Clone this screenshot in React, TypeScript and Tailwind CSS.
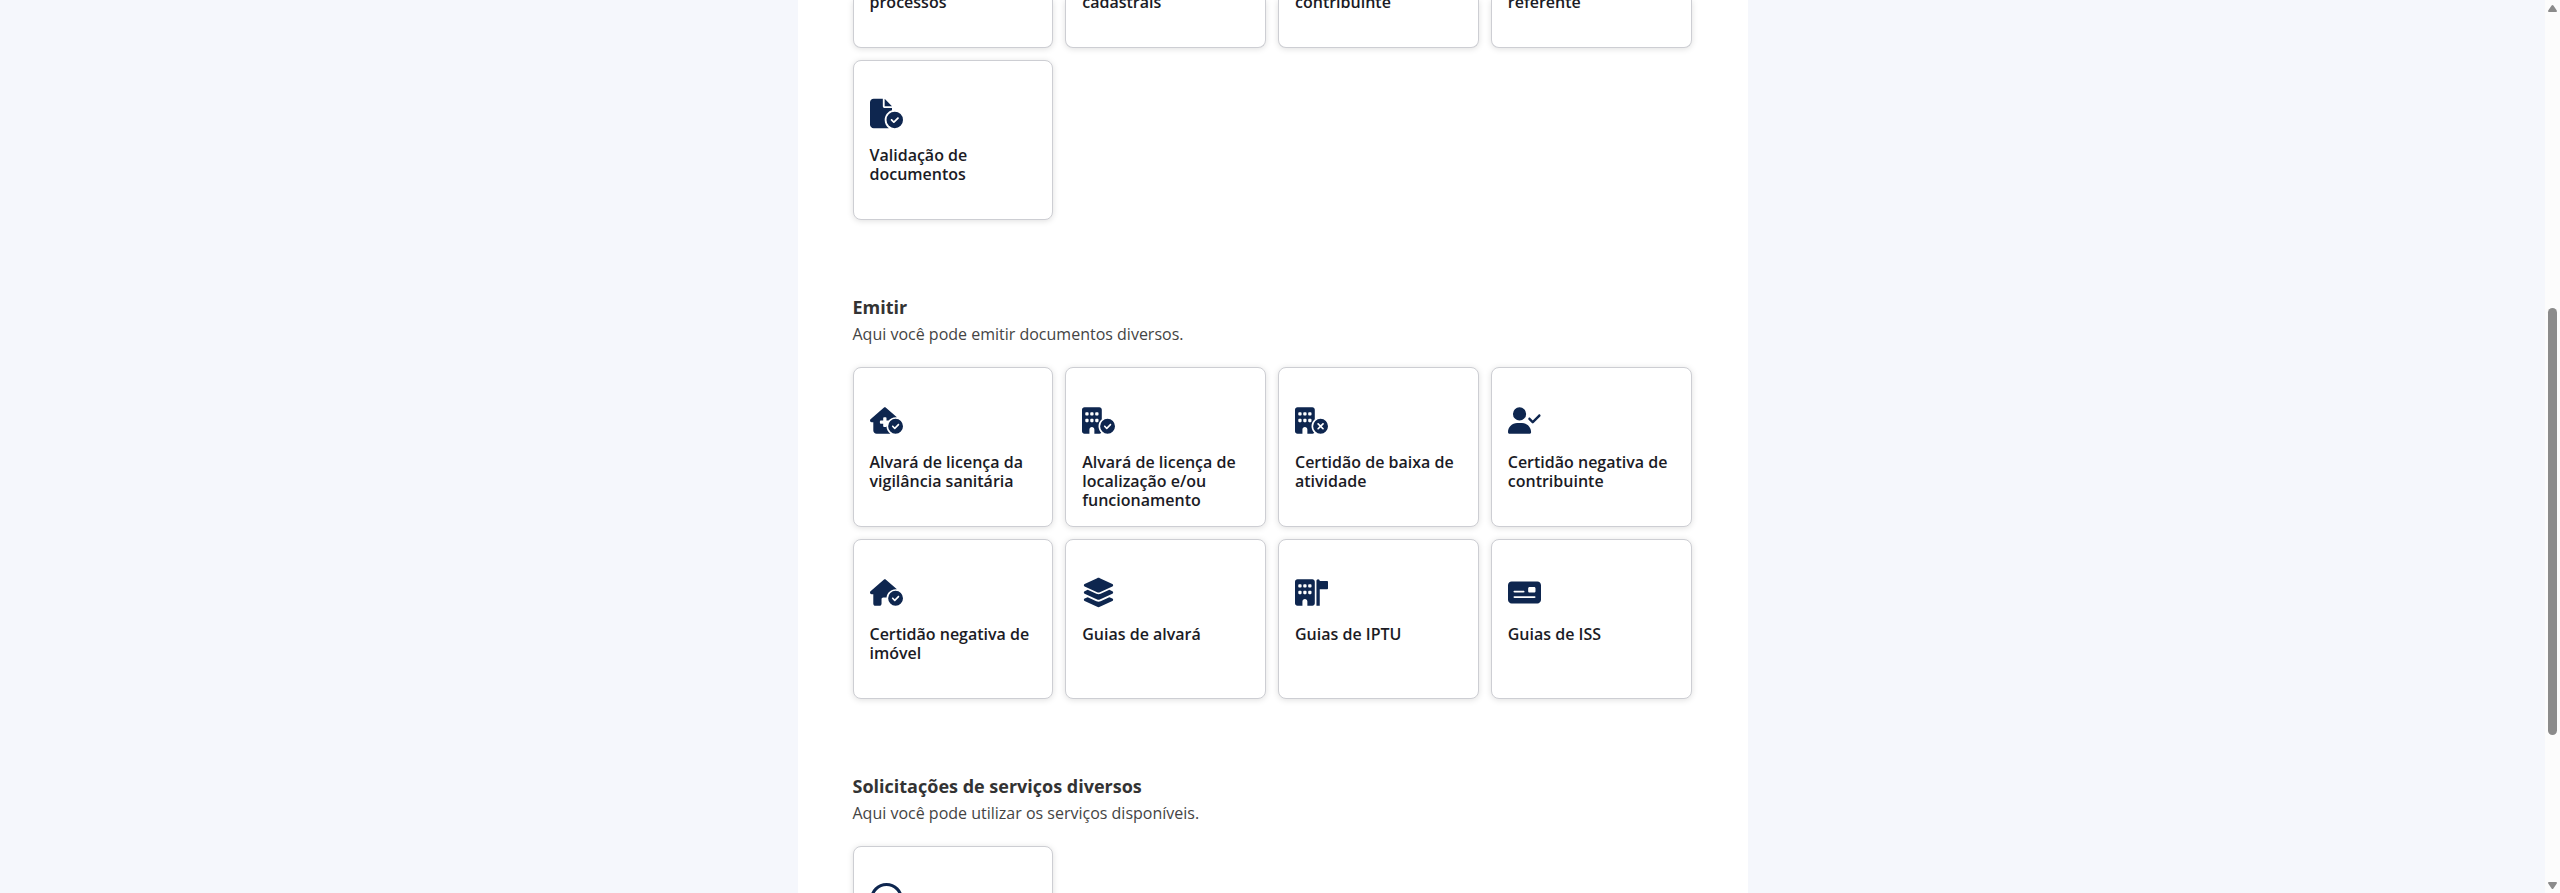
import type { ReactNode } from 'react';
import {
  FaFileCircleCheck,
  FaHouseMedicalCircleCheck,
  FaBuildingCircleCheck,
  FaBuildingCircleXmark,
  FaUserCheck,
  FaHouseCircleCheck,
  FaLayerGroup,
  FaBuildingFlag,
  FaMoneyCheck,
  FaRegCircleCheck,
} from 'react-icons/fa6';

type Service = { title: string; icon?: ReactNode };

const iconClass = 'h-[33px] w-[33px] text-[#0e264f]';

const consultas: Service[] = [
  { title: 'processos' },
  { title: 'cadastrais' },
  { title: 'contribuinte' },
  { title: 'referente' },
  { title: 'Validação de documentos', icon: <FaFileCircleCheck className={iconClass} /> },
];

const emitir: Service[] = [
  { title: 'Alvará de licença da vigilância sanitária', icon: <FaHouseMedicalCircleCheck className={iconClass} /> },
  { title: 'Alvará de licença de localização e/ou funcionamento', icon: <FaBuildingCircleCheck className={iconClass} /> },
  { title: 'Certidão de baixa de atividade', icon: <FaBuildingCircleXmark className={iconClass} /> },
  { title: 'Certidão negativa de contribuinte', icon: <FaUserCheck className={iconClass} /> },
  { title: 'Certidão negativa de imóvel', icon: <FaHouseCircleCheck className={iconClass} /> },
  { title: 'Guias de alvará', icon: <FaLayerGroup className={iconClass} /> },
  { title: 'Guias de IPTU', icon: <FaBuildingFlag className={iconClass} /> },
  { title: 'Guias de ISS', icon: <FaMoneyCheck className={iconClass} /> },
];

const solicitacoes: Service[] = [{ title: '', icon: <FaRegCircleCheck className={iconClass} /> }];

function Card({ title, icon }: Service) {
  return (
    <a className="flex h-40 flex-col rounded-lg border border-[#cdced3] bg-white px-4 pt-9 shadow-[0_1px_6px_rgba(0,0,0,0.13)]">
      <div className="h-[33px]">{icon}</div>
      <span className="mt-4 text-base leading-[19.2px] font-semibold text-[#1b1b25]">{title}</span>
    </a>
  );
}

function Grid({ items }: { items: Service[] }) {
  return (
    <div className="grid grid-cols-4 gap-3">
      {items.map((s, i) => (
        <Card key={i} {...s} />
      ))}
    </div>
  );
}

function Heading({ title, text }: { title: string; text: string }) {
  return (
    <header className="flex h-[147px] flex-col pt-[75px]">
      <h2 className="text-lg leading-[25px] font-bold text-[#333333]">{title}</h2>
      <p className="mt-[2px] text-base leading-6 text-[#444444]">{text}</p>
    </header>
  );
}

/* The first row of "consultas" is scrolled partly out of view: only its last title line shows. */
function ScrolledRow({ items }: { items: Service[] }) {
  return (
    <div className="mb-3 grid h-12 grid-cols-4 gap-3">
      {items.map((s, i) => (
        <a
          key={i}
          className="flex h-12 flex-col rounded-b-lg border border-t-0 border-[#cdced3] bg-white px-4 shadow-[0_1px_6px_rgba(0,0,0,0.13)]"
        >
          <span className="-mt-[7px] text-base leading-[19.2px] font-semibold text-[#1b1b25]">{s.title}</span>
        </a>
      ))}
    </div>
  );
}

export default function App() {
  return (
    <div className="flex h-[893px] w-full overflow-hidden bg-[#f5f7fc] font-['Open_Sans',sans-serif]">
      <div className="flex h-full flex-1 justify-center">
        <main className="h-full w-[950px] overflow-hidden bg-white pr-[56px] pl-[55px]">
          <ScrolledRow items={consultas.slice(0, 4)} />
          <Grid items={consultas.slice(4)} />
          <Heading title="Emitir" text="Aqui você pode emitir documentos diversos." />
          <Grid items={emitir} />
          <Heading
            title="Solicitações de serviços diversos"
            text="Aqui você pode utilizar os serviços disponíveis."
          />
          <Grid items={solicitacoes} />
        </main>
      </div>
      <div className="flex h-full w-[15px] flex-col items-center bg-[#fcfcfc] pt-[5px] pb-[4px]">
        <svg width="9" height="7" viewBox="0 0 9 7" fill="#8b8b8b" className="shrink-0">
          <path d="M4.5 0 Q5 0 5.4 .6 L8.8 5.4 Q9.2 7 8.2 7 H.8 Q-.2 7 .2 5.4 L3.6 .6 Q4 0 4.5 0Z" />
        </svg>
        <div className="mt-[296px] h-[427px] w-[9px] shrink-0 rounded-full bg-[#8b8b8b]" />
        <svg width="9" height="7" viewBox="0 0 9 7" fill="#8b8b8b" className="mt-auto shrink-0">
          <path d="M4.5 7 Q5 7 5.4 6.4 L8.8 1.6 Q9.2 0 8.2 0 H.8 Q-.2 0 .2 1.6 L3.6 6.4 Q4 7 4.5 7Z" />
        </svg>
      </div>
    </div>
  );
}
